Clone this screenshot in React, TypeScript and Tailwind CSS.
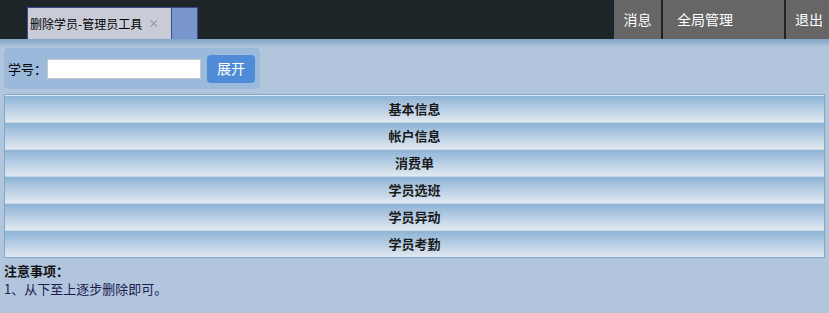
import React from "react";

const rows = ["基本信息", "帐户信息", "消费单", "学员选班", "学员异动", "学员考勤"];

export default function App() {
  return (
    <div
      className="w-[829px] h-[313px] overflow-hidden bg-[#b1c5dd] text-[13px] text-black"
      style={{ fontFamily: '"Noto Sans CJK SC", "Liberation Sans", sans-serif' }}
    >
      {/* top bar */}
      <div className="h-[39px] bg-[#1e2529] flex items-end">
        <div className="ml-[27px] h-[32px] flex border-t border-l border-r border-[#3b4a8c]">
          <div className="w-[143px] bg-[#c9ccd7] flex items-center pl-[2px] text-[12px] text-black">
            <span>删除学员-管理员工具</span>
            <span className="ml-[6px] text-[#888] text-[11px]">×</span>
          </div>
          <div className="w-[26px] bg-[#7896cc] border-l border-[#3b4a8c]" />
        </div>
        <div className="ml-auto h-[39px] flex gap-[2px] text-white text-[14px]">
          <div className="w-[47px] bg-[#666666] flex items-center justify-center">消息</div>
          <div className="w-[121px] bg-[#666666] flex items-center pl-[14px]">全局管理</div>
          <div className="w-[43px] bg-[#666666] flex items-center pl-[9px]">退出</div>
        </div>
      </div>
      <div className="h-[8px] bg-gradient-to-b from-[#7ea5c8] to-[#b1c5dd]" />

      {/* search panel */}
      <div className="ml-[4px] mt-[1px] w-[256px] h-[41px] rounded-[5px] bg-[#9bb9db] flex items-center pl-[4px]">
        <span className="text-[13px] w-[39px]">学号：</span>
        <input className="w-[154px] h-[20px] bg-white border border-[#c8c8c8] outline-none" />
        <button className="ml-[6px] w-[48px] h-[28px] rounded-[4px] bg-[#4f8bd6] text-white text-[14px]">
          展开
        </button>
      </div>

      {/* accordion */}
      <div className="mx-[4px] mt-[5px] border border-[#7eaac8]">
        {rows.map((r, i) => (
          <div
            key={r}
            className={`h-[27px] flex items-center justify-center font-bold text-[13px] text-[#1a1a1a] bg-gradient-to-b from-[#8db3d6] to-[#e2e9f1] ${
              i === 0 ? "border-t border-[#dfe8f0]" : "border-t border-[#c7d6e4]"
            }`}
          >
            {r}
          </div>
        ))}
      </div>

      {/* notes */}
      <div className="ml-[4px] mt-[4px] leading-[18px] text-[13px]">
        <div className="font-bold text-[#111]">注意事项：</div>
        <div className="text-[#1c1c50]">1、从下至上逐步删除即可。</div>
      </div>
    </div>
  );
}
